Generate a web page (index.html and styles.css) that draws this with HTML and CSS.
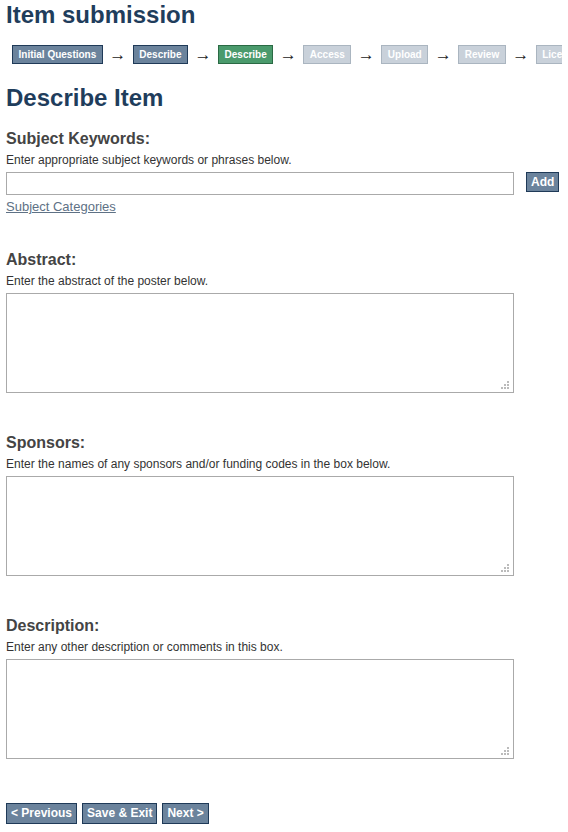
FILE: index.html
```html
<!DOCTYPE html>
<html lang="en">
<head>
    <meta charset="UTF-8">
    <title>Item submission</title>
    <link rel="stylesheet" href="styles.css">
</head>
<body>
    <div class="page">
        <h1 class="page-title">Item submission</h1>
        <ul class="progress">
            <li class="step done">Initial Questions</li>
            <li class="arrow">&rarr;</li>
            <li class="step done">Describe</li>
            <li class="arrow">&rarr;</li>
            <li class="step current">Describe</li>
            <li class="arrow">&rarr;</li>
            <li class="step todo">Access</li>
            <li class="arrow">&rarr;</li>
            <li class="step todo">Upload</li>
            <li class="arrow">&rarr;</li>
            <li class="step todo">Review</li>
            <li class="arrow">&rarr;</li>
            <li class="step todo">License</li>
        </ul>

        <h2 class="form-title">Describe Item</h2>

        <div class="field field-first">
            <label class="field-label" for="keywords">Subject Keywords:</label>
            <div class="field-help">Enter appropriate subject keywords or phrases below.</div>
            <div class="input-row">
                <input type="text" id="keywords" class="text-input">
                <button class="btn btn-add">Add</button>
            </div>
            <a href="#" class="field-link">Subject Categories</a>
        </div>

        <div class="field">
            <label class="field-label" for="abstract">Abstract:</label>
            <div class="field-help">Enter the abstract of the poster below.</div>
            <div class="area-wrap">
                <textarea id="abstract" class="text-area"></textarea>
            </div>
        </div>

        <div class="field">
            <label class="field-label" for="sponsors">Sponsors:</label>
            <div class="field-help">Enter the names of any sponsors and/or funding codes in the box below.</div>
            <div class="area-wrap">
                <textarea id="sponsors" class="text-area"></textarea>
            </div>
        </div>

        <div class="field">
            <label class="field-label" for="description">Description:</label>
            <div class="field-help">Enter any other description or comments in this box.</div>
            <div class="area-wrap">
                <textarea id="description" class="text-area"></textarea>
            </div>
        </div>

        <div class="actions">
            <button class="btn">&lt; Previous</button>
            <button class="btn">Save &amp; Exit</button>
            <button class="btn">Next &gt;</button>
        </div>
    </div>
</body>
</html>
```

FILE: styles.css
```css
* {
    margin: 0;
    padding: 0;
    box-sizing: border-box;
}

body {
    font-family: Arial, "Liberation Sans", sans-serif;
    color: #333;
    background: #fff;
    overflow: hidden;
}

.page {
    padding: 1px 6px;
    width: 568px;
}

.page-title {
    font-size: 24px;
    line-height: 28px;
    color: #1f3d5c;
    font-weight: bold;
}

.progress {
    list-style: none;
    display: flex;
    align-items: center;
    margin-top: 16px;
    padding-left: 6px;
    white-space: nowrap;
    overflow: hidden;
}

.step {
    font-size: 10px;
    font-weight: bold;
    color: #fff;
    padding: 2px 5.5px;
    line-height: 13px;
    border: 1px solid #1f3a58;
    flex-shrink: 0;
}

.step.done {
    background: #6b839c;
}

.step.current {
    background: #4a9a6c;
    border-color: #2a6a44;
}

.step.todo {
    background: #c9d1da;
    border-color: #aab5c0;
}

.arrow {
    width: 30px;
    text-align: center;
    font-size: 17px;
    line-height: 17px;
    color: #222;
    flex-shrink: 0;
}

.form-title {
    font-size: 24px;
    line-height: 28px;
    color: #1f3d5c;
    margin-top: 20px;
}

.field {
    margin-top: 17px;
    margin-bottom: 40px;
}

.field-first {
    margin-bottom: 35px;
}

.field-label {
    display: block;
    font-size: 16px;
    font-weight: bold;
    color: #444;
    line-height: 20px;
}

.field-help {
    font-size: 12px;
    line-height: 16px;
    margin-top: 3px;
    margin-bottom: 4px;
    color: #333;
}

.input-row {
    display: flex;
    align-items: flex-start;
    gap: 12px;
}

.text-input {
    width: 508px;
    height: 23px;
    border: 1px solid #aaa;
}

.area-wrap {
    position: relative;
    width: 508px;
}

.text-area {
    display: block;
    width: 508px;
    height: 100px;
    border: 1px solid #aaa;
    resize: none;
}

/* grip dots in the corner */
.area-wrap::after {
    content: "";
    position: absolute;
    right: 5px;
    bottom: 4px;
    width: 2px;
    height: 2px;
    background: #bbb;
    box-shadow: -3px 0 #bbb, -6px 0 #bbb, 0 -3px #bbb, -3px -3px #bbb, 0 -6px #bbb;
}

.field-link {
    display: inline-block;
    font-size: 13px;
    line-height: 16px;
    color: #5e7185;
    margin-top: 4px;
}

.btn {
    font-family: Arial, "Liberation Sans", sans-serif;
    font-size: 12px;
    font-weight: bold;
    color: #fff;
    background: #6b839c;
    border: 1px solid #1f3a58;
    padding: 3px 4px;
    line-height: 13px;
    cursor: pointer;
}

.btn-add {
    padding: 2px 4px;
    line-height: 14px;
}

.actions {
    display: flex;
    gap: 5px;
    margin-top: 44px;
}
```
